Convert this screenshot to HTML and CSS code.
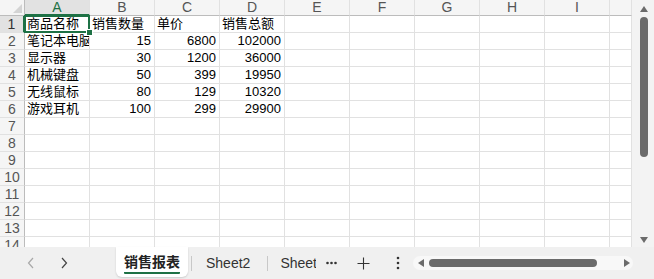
FILE: index.html
```html
<!DOCTYPE html>
<html lang="zh-CN">
<head>
    <meta charset="UTF-8">
    <title>销售报表</title>
    <link rel="stylesheet" href="styles.css">
</head>
<body>
    <div class="sheet">
        <div class="main">
            <div class="grid" id="grid"></div>
            <div class="vscroll">
                <span class="arrow up"></span>
                <div class="vthumb"></div>
                <span class="arrow down"></span>
            </div>
        </div>

        <div class="tabbar">
            <div class="nav">
                <svg width="8" height="12" viewBox="0 0 8 12"><path d="M6 1L1.5 6 6 11" fill="none" stroke="#a8a8a8" stroke-width="1.2"/></svg>
                <svg width="8" height="12" viewBox="0 0 8 12"><path d="M2 1l4.5 5L2 11" fill="none" stroke="#444" stroke-width="1.2"/></svg>
            </div>
            <div class="tab active"><span>销售报表</span></div>
            <div class="sep"></div>
            <div class="tab">Sheet2</div>
            <div class="sep"></div>
            <div class="tab cut">Sheet</div>
            <div class="more">
                <svg width="11" height="4" viewBox="0 0 11 4"><circle cx="1.5" cy="2" r="1.3" fill="#333"/><circle cx="5.5" cy="2" r="1.3" fill="#333"/><circle cx="9.5" cy="2" r="1.3" fill="#333"/></svg>
            </div>
            <div class="add">
                <svg width="13" height="13" viewBox="0 0 13 13"><path d="M6.5 0.5v12M0.5 6.5h12" stroke="#333" stroke-width="1.1"/></svg>
            </div>
            <div class="menu">
                <svg width="4" height="14" viewBox="0 0 4 14"><circle cx="2" cy="2" r="1.3" fill="#333"/><circle cx="2" cy="7" r="1.3" fill="#333"/><circle cx="2" cy="12" r="1.3" fill="#333"/></svg>
            </div>
            <div class="hscroll">
                <span class="arrow left"></span>
                <div class="hthumb"></div>
                <span class="arrow right"></span>
            </div>
        </div>
    </div>

    <script>
        // 表格数据
        var data = [
            ['商品名称', '销售数量', '单价', '销售总额'],
            ['笔记本电脑', 15, 6800, 102000],
            ['显示器', 30, 1200, 36000],
            ['机械键盘', 50, 399, 19950],
            ['无线鼠标', 80, 129, 10320],
            ['游戏耳机', 100, 299, 29900]
        ];
        var cols = ['A', 'B', 'C', 'D', 'E', 'F', 'G', 'H', 'I', ''];
        var html = '<div class="corner"></div>';
        cols.forEach(function (c, i) {
            html += '<div class="ch' + (i === 0 ? ' sel' : '') + '">' + c + '</div>';
        });
        for (var r = 1; r <= 14; r++) {
            html += '<div class="rh' + (r === 1 ? ' sel' : '') + '">' + r + '</div>';
            for (var c = 0; c < cols.length; c++) {
                var v = data[r - 1] ? data[r - 1][c] : undefined;
                var cls = 'cell';
                if (typeof v === 'number') cls += ' num';
                if (r === 1 && c === 0) cls += ' active';
                html += '<div class="' + cls + '">' + (v === undefined ? '' : v) + '</div>';
            }
        }
        document.getElementById('grid').innerHTML = html;
    </script>
</body>
</html>
```

FILE: styles.css
```css
body {
    margin: 0;
    font-family: 'Liberation Sans', 'Noto Sans CJK SC', sans-serif;
    background-color: #fff;
}
.sheet {
    width: 654px;
    height: 279px;
    display: flex;
    flex-direction: column;
    overflow: hidden;
}
.main {
    height: 247px;
    display: flex;
}
.grid {
    width: 632px;
    display: grid;
    grid-template-columns: 25px repeat(9, 65px) 22px;
    grid-template-rows: 16px;
    grid-auto-rows: 17px;
    overflow: hidden;
}
.grid > div {
    box-sizing: border-box;
    border-right: 1px solid #e1e1e1;
    border-bottom: 1px solid #e1e1e1;
    font-size: 13px;
    line-height: 16px;
    white-space: nowrap;
    overflow: hidden;
}
.corner {
    background-color: #f5f5f5;
    position: relative;
    border-right-color: #bcbcbc !important;
    border-bottom-color: #bcbcbc !important;
}
.corner::after {
    content: '';
    position: absolute;
    right: 2px;
    bottom: 2px;
    border-left: 9px solid transparent;
    border-bottom: 9px solid #d4d4d4;
}
.ch {
    background-color: #f5f5f5;
    color: #555;
    text-align: center;
    font-size: 14px !important;
    border-bottom-color: #bcbcbc !important;
    line-height: 15px !important;
}
.ch.sel {
    background-color: #e2e2e2;
    color: #1e7145;
    border-bottom: 2px solid #1e7145 !important;
}
.rh {
    background-color: #f5f5f5;
    color: #555;
    text-align: center;
    font-size: 14px !important;
    border-right-color: #bcbcbc !important;
}
.rh.sel {
    background-color: #e2e2e2;
    color: #333;
    border-right: 2px solid #1e7145 !important;
}
.cell {
    padding: 0 2px;
    color: #000;
}
.cell.num {
    text-align: right;
    padding-right: 3px;
}
.cell.active {
    position: relative;
    overflow: visible !important;
    z-index: 1;
}
.cell.active::before {
    content: '';
    position: absolute;
    left: -1px;
    top: -1px;
    right: -1px;
    bottom: -1px;
    border: 2px solid #1e7145;
}
.cell.active::after {
    content: '';
    position: absolute;
    right: -4px;
    bottom: -4px;
    width: 5px;
    height: 5px;
    background-color: #1e7145;
    border: 1px solid #fff;
}
.vscroll {
    width: 22px;
    background-color: #f3f3f3;
    position: relative;
}
.vthumb {
    position: absolute;
    left: 8px;
    top: 17px;
    width: 8px;
    height: 140px;
    border-radius: 4px;
    background-color: #6b6b6b;
}
.arrow {
    position: absolute;
    width: 0;
    height: 0;
}
.arrow.up {
    left: 8px;
    top: 6px;
    border-left: 4px solid transparent;
    border-right: 4px solid transparent;
    border-bottom: 6px solid #6b6b6b;
}
.arrow.down {
    left: 8px;
    top: 237px;
    border-left: 4px solid transparent;
    border-right: 4px solid transparent;
    border-top: 6px solid #6b6b6b;
}
.tabbar {
    height: 32px;
    background-color: #f0f0f0;
    display: flex;
    align-items: center;
    color: #333;
    font-size: 14px;
}
.nav {
    width: 116px;
    display: flex;
    gap: 25px;
    padding-left: 27px;
    box-sizing: border-box;
}
.tab {
    padding: 0 14px;
    height: 30px;
    line-height: 30px;
}
.tab.active {
    align-self: flex-start;
    background-color: #fff;
    border-radius: 0 0 6px 6px;
    box-shadow: 0 1px 2px rgba(0,0,0,0.15);
    padding: 0 8px;
    width: 72px;
    box-sizing: border-box;
    font-weight: bold;
    color: #222;
}
.tab.active span {
    display: inline-block;
    line-height: 20px;
    margin-top: 3px;
    border-bottom: 2px solid #1e7145;
    border-radius: 1px;
}
.sep {
    width: 1px;
    height: 15px;
    background-color: #c8c8c8;
    margin: 0 0 0 3px;
}
.tab.cut {
    width: 36px;
    padding: 0 0 0 12px;
    overflow: hidden;
}
.more {
    display: flex;
    margin-left: 10px;
}
.add {
    display: flex;
    margin-left: 20px;
}
.menu {
    display: flex;
    margin-left: 26px;
}
.hscroll {
    position: relative;
    width: 220px;
    height: 14px;
    margin-left: 13px;
    background-color: #f8f8f8;
    border-radius: 7px;
}
.hthumb {
    position: absolute;
    left: 16px;
    top: 3px;
    width: 168px;
    height: 8px;
    border-radius: 4px;
    background-color: #6b6b6b;
}
.arrow.left {
    left: 5px;
    top: 3px;
    border-top: 4px solid transparent;
    border-bottom: 4px solid transparent;
    border-right: 6px solid #6b6b6b;
}
.arrow.right {
    left: 211px;
    top: 3px;
    border-top: 4px solid transparent;
    border-bottom: 4px solid transparent;
    border-left: 6px solid #6b6b6b;
}
```
